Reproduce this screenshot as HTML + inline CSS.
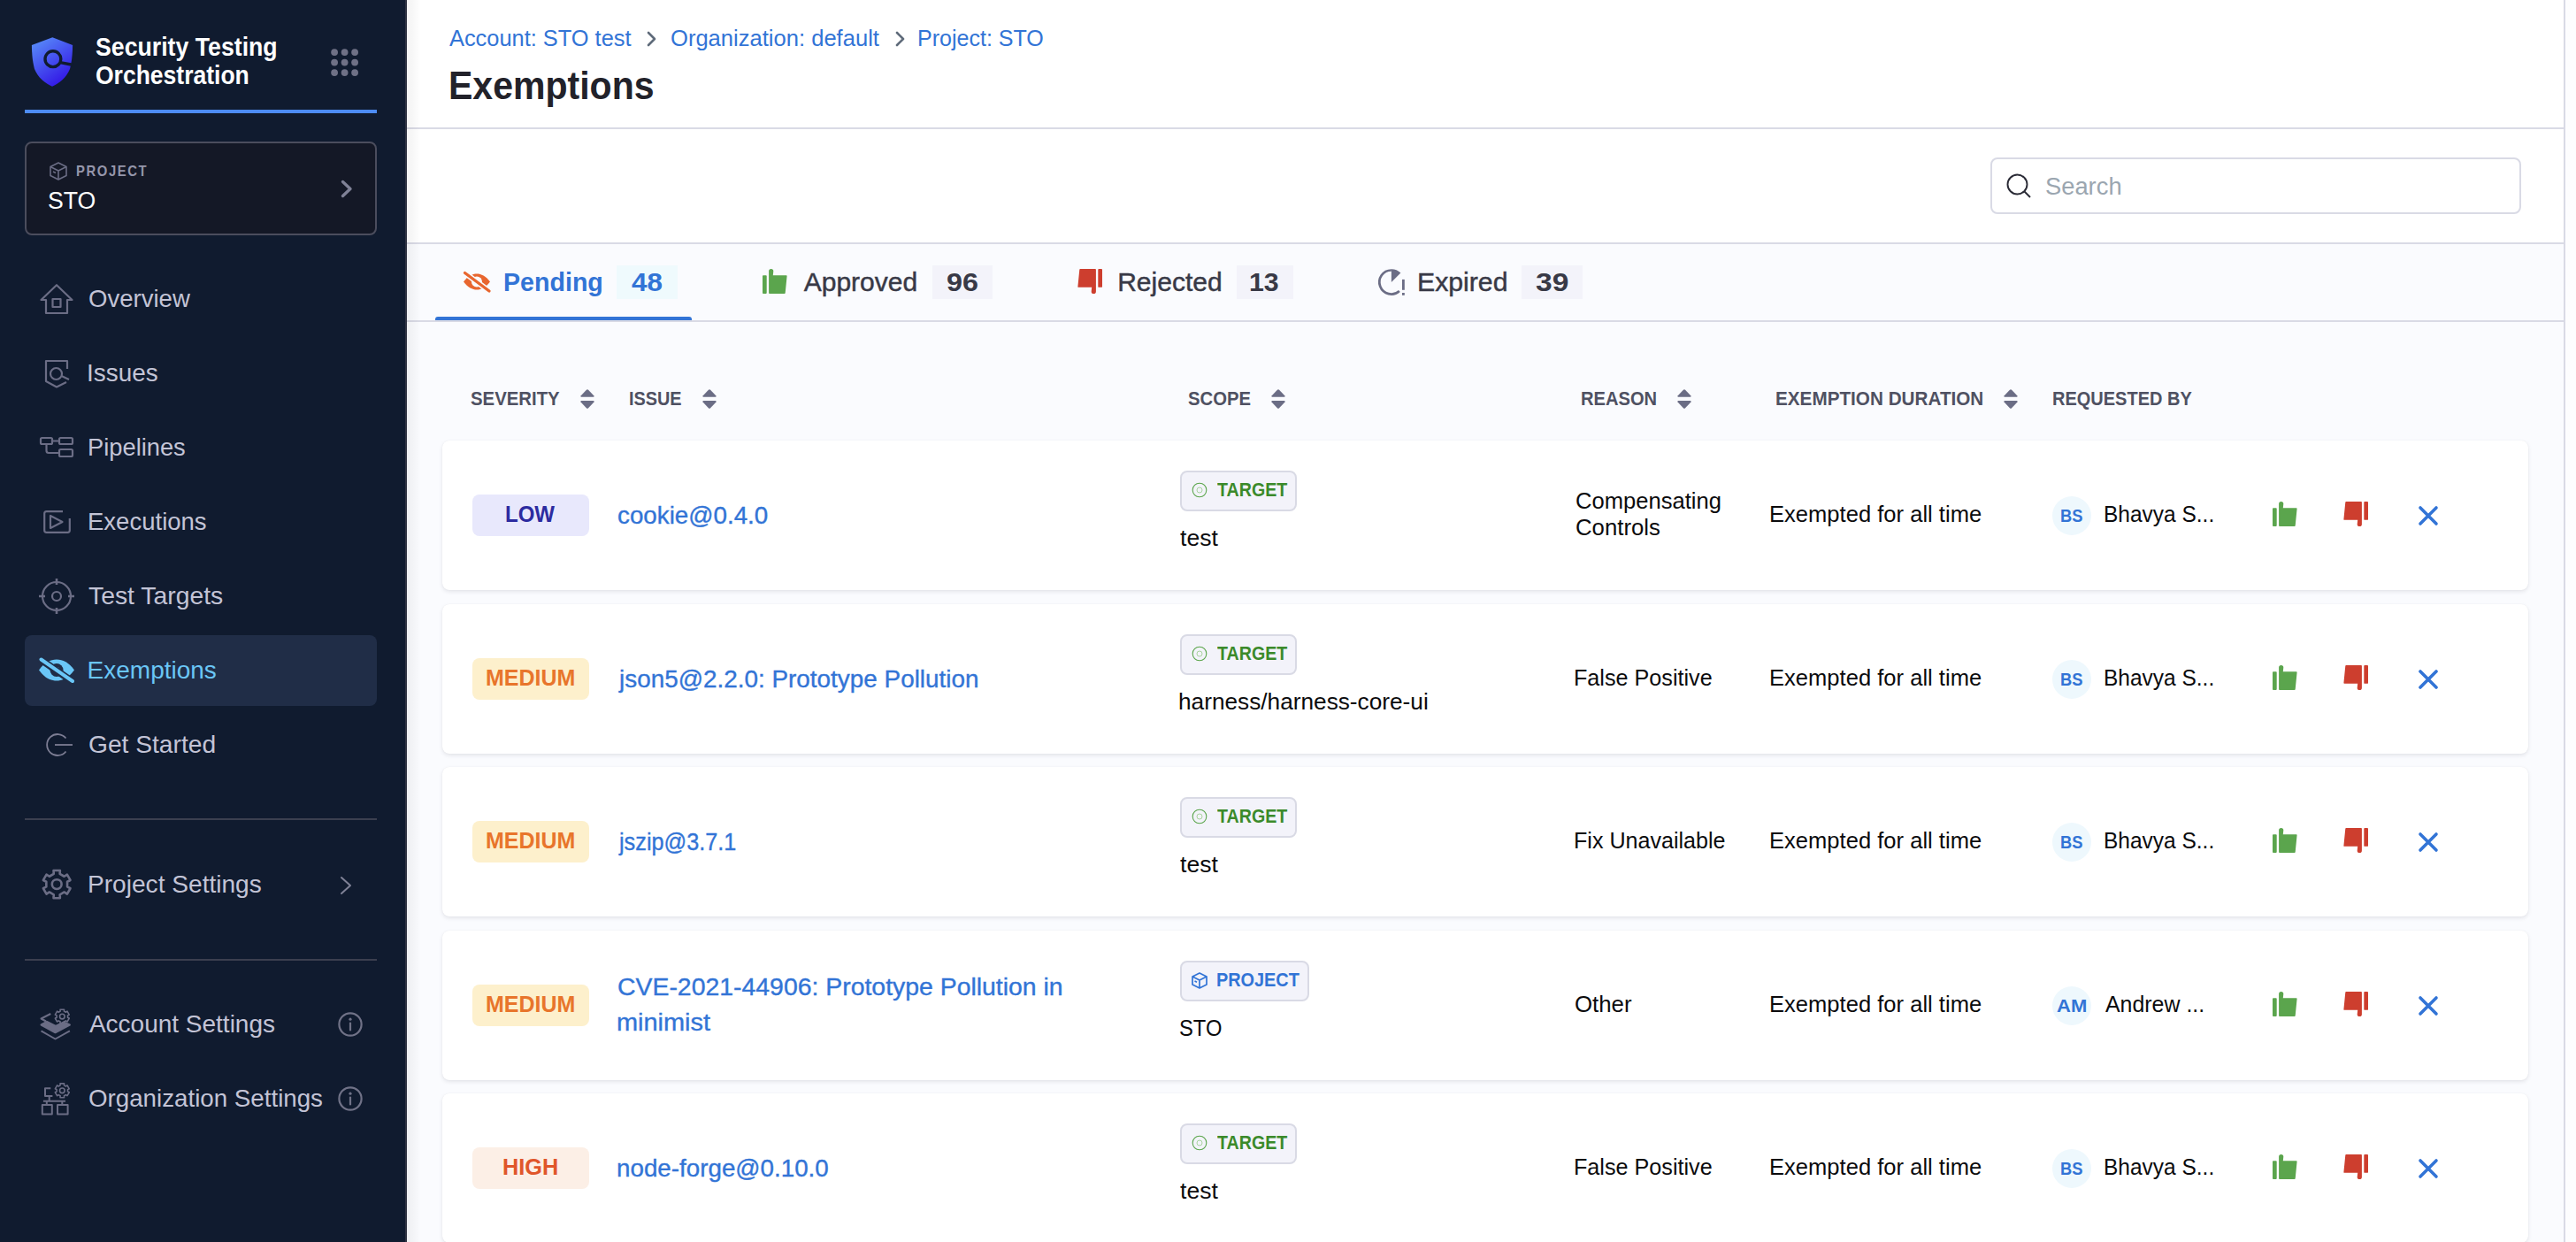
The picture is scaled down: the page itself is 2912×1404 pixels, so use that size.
<!DOCTYPE html>
<html><head><meta charset="utf-8"><title>Exemptions</title><style>
*{box-sizing:border-box;margin:0;padding:0}
html,body{width:2912px;height:1404px;overflow:hidden;background:#fafbfe;font-family:"Liberation Sans",sans-serif}
.a{position:absolute}
svg{position:absolute;overflow:visible}
.t{position:absolute;white-space:nowrap;line-height:1;transform-origin:0 0}
.card{position:absolute;left:500px;width:2358px;height:169px;background:#fff;border-radius:8px;box-shadow:0 0 1px rgba(40,41,61,0.08),0 2px 4px rgba(96,97,112,0.14)}
</style></head><body>
<div class="a" style="left:0px;top:0px;width:458px;height:1404px;background:#101b2f;"></div>
<div class="a" style="left:458px;top:0px;width:2px;height:1404px;background:#2f3342;"></div>
<svg style="left:35px;top:42px" width="48" height="56" viewBox="0 0 48 56">
<defs><linearGradient id="lg" x1="0" y1="0" x2="0.6" y2="1"><stop offset="0" stop-color="#5b95fa"/><stop offset="1" stop-color="#3318e6"/></linearGradient></defs>
<path d="M24.3 0.2 L47.1 8.9 C47 20 46 28 44 36 C40 46 32 52 24 55.7 C16 52 8 46 4 36 C2 28 1 20 0.9 8.9 Z" fill="url(#lg)"/>
<circle cx="24.9" cy="24.7" r="8.9" fill="none" stroke="#101b2f" stroke-width="3.4"/>
<path d="M33 28.6 L48 31.5" stroke="#101b2f" stroke-width="3.4"/>
</svg>
<svg style="left:374px;top:55px" width="32" height="32" viewBox="0 0 32 32" fill="#6f7186"><circle cx="4.1" cy="4.1" r="3.9"/><circle cx="4.1" cy="15.6" r="3.9"/><circle cx="4.1" cy="27.1" r="3.9"/><circle cx="15.6" cy="4.1" r="3.9"/><circle cx="15.6" cy="15.6" r="3.9"/><circle cx="15.6" cy="27.1" r="3.9"/><circle cx="27.1" cy="4.1" r="3.9"/><circle cx="27.1" cy="15.6" r="3.9"/><circle cx="27.1" cy="27.1" r="3.9"/></svg>
<div class="a" style="left:28px;top:124px;width:398px;height:4px;background:#4d8cf6;"></div>
<div class="a" style="left:28px;top:160px;width:398px;height:106px;border:2px solid #4b4d5d;border-radius:8px;background:#141826"></div>
<svg style="left:56px;top:183px" width="20" height="21" viewBox="0 0 20 21" fill="none" stroke="#6b6d85" stroke-width="1.6" stroke-linejoin="round">
<path d="M10 1 L19 5.5 V15.5 L10 20 L1 15.5 V5.5 Z"/><path d="M1 5.5 L10 10 L19 5.5 M10 10 V20"/><path d="M4 11 L7 12.5"/></svg>
<svg style="left:385px;top:203px" width="14" height="21" viewBox="0 0 14 21" fill="none" stroke="#7f8196" stroke-width="3.4" stroke-linecap="round" stroke-linejoin="round"><path d="M2.5 2.5 L11 10.5 L2.5 18.5"/></svg>
<div class="a" style="left:28px;top:718px;width:398px;height:80px;background:#202d47;border-radius:8px"></div>
<svg style="left:45px;top:321px" width="38" height="34" viewBox="0 0 38 34" stroke="#6b6d85" stroke-width="2.2" fill="none" stroke-linejoin="round"><path d="M19 1.2 L36.5 18 H31 V33 H7 V18 H1.5 Z"/><rect x="14.5" y="17" width="9" height="9"/></svg>
<svg style="left:50px;top:406px" width="30" height="33" viewBox="0 0 30 33" stroke="#6b6d85" stroke-width="2.2" fill="none" stroke-linejoin="round"><path d="M26 11 V2 H2 V25 L14 31.5 L25 26"/><circle cx="13.5" cy="16.5" r="6.5"/><path d="M19.5 19 L28 23"/></svg>
<svg style="left:45px;top:494px" width="38" height="23" viewBox="0 0 38 23" stroke="#6b6d85" stroke-width="2.2" fill="none" stroke-linejoin="round"><rect x="1" y="1" width="13" height="7" rx="1.5"/><rect x="22" y="1" width="15" height="7" rx="1.5"/><rect x="22" y="14" width="15" height="8" rx="1.5"/><path d="M14 4.5 H22 M7.5 8 V15.5 Q7.5 18 10 18 H22"/></svg>
<svg style="left:49px;top:577px" width="31" height="26" viewBox="0 0 31 26" stroke="#6b6d85" stroke-width="2.2" fill="none" stroke-linejoin="round"><path d="M22 1.2 H3.5 Q1.2 1.2 1.2 3.5 V22.5 Q1.2 24.8 3.5 24.8 H27.5 Q29.8 24.8 29.8 22.5 V9"/><path d="M8 6 V20 L21.5 13 Z"/></svg>
<svg style="left:45px;top:655px" width="38" height="38" viewBox="0 0 38 38" stroke="#6b6d85" stroke-width="2.2" fill="none" stroke-linejoin="round"><circle cx="19" cy="19" r="16"/><circle cx="19" cy="19" r="5"/><path d="M19 -1 V6 M19 32 V39 M-1 19 H6 M32 19 H39" stroke-width="2.6"/></svg>
<svg style="left:43px;top:743px" width="42" height="30" viewBox="0 0 42 30">
<path d="M1 14.5 C7 6 14 2.5 21 2.5 C28 2.5 35 6 41 14.5 C35 23 28 26.5 21 26.5 C14 26.5 7 23 1 14.5 Z" fill="#6ac6f6"/>
<circle cx="21" cy="14.5" r="7.5" fill="#202d47"/><circle cx="21" cy="14.5" r="3.5" fill="#6ac6f6"/>
<path d="M3 2.5 L39 27.5" stroke="#202d47" stroke-width="8" stroke-linecap="round"/>
<path d="M3.5 2.5 L39 27" stroke="#6ac6f6" stroke-width="4" stroke-linecap="round"/></svg>
<svg style="left:50px;top:828px" width="34" height="28" viewBox="0 0 34 28" stroke="#7c7d93" stroke-width="1.8" fill="none"><path d="M24.5 6.5 A12 12 0 1 0 24.5 21.5"/><path d="M12 14 H32"/></svg>
<div class="a" style="left:28px;top:925px;width:398px;height:2px;background:#3b3f4f;"></div>
<div class="a" style="left:28px;top:1084px;width:398px;height:2px;background:#3b3f4f;"></div>
<svg style="left:47px;top:982px" width="34" height="35" viewBox="0 0 34 35" stroke="#6b6d85" stroke-width="2.2" fill="none" stroke-linejoin="round"><path d="M13.74 5.90 L13.55 2.02 L20.85 2.02 L20.66 5.90 L25.60 8.75 L28.87 6.65 L32.52 12.97 L29.06 14.75 L29.06 20.45 L32.52 22.23 L28.87 28.55 L25.60 26.45 L20.66 29.30 L20.85 33.18 L13.55 33.18 L13.74 29.30 L8.80 26.45 L5.53 28.55 L1.88 22.23 L5.34 20.45 L5.34 14.75 L1.88 12.97 L5.53 6.65 L8.80 8.75Z" stroke-width="2.6"/><circle cx="17.2" cy="17.6" r="5.4" stroke-width="2.6"/></svg>
<svg style="left:384px;top:990px" width="14" height="22" viewBox="0 0 14 22" fill="none" stroke="#7f8196" stroke-width="2" stroke-linecap="round" stroke-linejoin="round"><path d="M2 2 L12 11 L2 20"/></svg>
<svg style="left:40px;top:1135px" width="45" height="130" viewBox="0 0 45 130" stroke="#6b6d85" stroke-width="2" fill="none" stroke-linejoin="round">
<path d="M28.14 8.18 L28.03 6.22 L32.57 6.22 L32.46 8.18 L34.35 9.27 L35.99 8.20 L38.26 12.12 L36.51 13.01 L36.51 15.19 L38.26 16.08 L35.99 20.00 L34.35 18.93 L32.46 20.02 L32.57 21.98 L28.03 21.98 L28.14 20.02 L26.25 18.93 L24.61 20.00 L22.34 16.08 L24.09 15.19 L24.09 13.01 L22.34 12.12 L24.61 8.20 L26.25 9.27Z" stroke-width="1.6"/><circle cx="30.3" cy="14.1" r="2.8" stroke-width="1.6"/>
<path d="M17.3 11 L6.5 16.5 L12 19.5"/>
<path d="M6.5 23.5 L13 20 L23 25 L32 20.5 L38.9 23.5 L22.5 32.3 Z" fill="#6b6d85"/>
<path d="M6.5 30.3 L22.5 39.5 L38.9 30.3"/>
<path d="M28.14 91.88 L28.03 89.92 L32.57 89.92 L32.46 91.88 L34.35 92.97 L35.99 91.90 L38.26 95.82 L36.51 96.71 L36.51 98.89 L38.26 99.78 L35.99 103.70 L34.35 102.63 L32.46 103.72 L32.57 105.68 L28.03 105.68 L28.14 103.72 L26.25 102.63 L24.61 103.70 L22.34 99.78 L24.09 98.89 L24.09 96.71 L22.34 95.82 L24.61 91.90 L26.25 92.97Z" stroke-width="1.6"/><circle cx="30.3" cy="97.8" r="2.8" stroke-width="1.6"/>
<path d="M17.3 95.2 H11 V104 H19.4 M15.7 104 V109.8 M8.9 109.8 H34 M12.8 109.8 V114 M30.3 109.8 V114"/>
<rect x="7.8" y="114" width="11" height="10.5"/><rect x="25" y="114" width="11.6" height="10.5"/>
</svg>
<svg style="left:382px;top:1144px" width="28" height="28" viewBox="0 0 28 28" stroke="#707287" stroke-width="2.2" fill="none" stroke-linecap="round"><circle cx="14" cy="14" r="12.6"/><path d="M14 12.5 V20.5"/><circle cx="14" cy="8.2" r="1.6" fill="#707287" stroke="none"/></svg>
<svg style="left:382px;top:1228px" width="28" height="28" viewBox="0 0 28 28" stroke="#707287" stroke-width="2.2" fill="none" stroke-linecap="round"><circle cx="14" cy="14" r="12.6"/><path d="M14 12.5 V20.5"/><circle cx="14" cy="8.2" r="1.6" fill="#707287" stroke="none"/></svg>
<div class="a" style="left:460px;top:0px;width:2438px;height:144px;background:#fff;"></div>
<div class="a" style="left:460px;top:144px;width:2438px;height:2px;background:#d9dae5;"></div>
<div class="a" style="left:460px;top:146px;width:2438px;height:128px;background:#fff;"></div>
<div class="a" style="left:460px;top:274px;width:2438px;height:2px;background:#d9dae5;"></div>
<div class="a" style="left:460px;top:276px;width:2438px;height:86px;background:#fafbfe;"></div>
<div class="a" style="left:460px;top:362px;width:2438px;height:2px;background:#d9dae5;"></div>
<div class="a" style="left:2898px;top:0px;width:2px;height:1404px;background:#d9dae5;"></div>
<div class="a" style="left:2900px;top:0px;width:12px;height:1404px;background:#fdfdfe;"></div>
<div class="a" style="left:460px;top:0px;width:16px;height:1404px;background:linear-gradient(90deg,rgba(0,0,0,0.05),rgba(0,0,0,0));"></div>
<svg style="left:731px;top:35px" width="11" height="18" viewBox="0 0 11 18" fill="none" stroke="#5f6b7a" stroke-width="2.6" stroke-linecap="round" stroke-linejoin="round"><path d="M2 2 L9 9 L2 16"/></svg>
<svg style="left:1012px;top:35px" width="11" height="18" viewBox="0 0 11 18" fill="none" stroke="#5f6b7a" stroke-width="2.6" stroke-linecap="round" stroke-linejoin="round"><path d="M2 2 L9 9 L2 16"/></svg>
<div class="a" style="left:2250px;top:178px;width:600px;height:64px;border:2px solid #d9dae5;border-radius:8px;background:#fff"></div>
<svg style="left:2268px;top:196px" width="28" height="28" viewBox="0 0 28 28" fill="none" stroke="#2a2b36" stroke-width="1.9"><circle cx="12.5" cy="12.5" r="11"/><path d="M20.5 20.5 L27 27"/></svg>
<div class="a" style="left:697px;top:300px;width:69px;height:38px;background:#effafd;"></div>
<div class="a" style="left:1054px;top:300px;width:68px;height:38px;background:#f3f3fa;"></div>
<div class="a" style="left:1398px;top:300px;width:64px;height:38px;background:#f3f3fa;"></div>
<div class="a" style="left:1720px;top:300px;width:69px;height:38px;background:#f3f3fa;"></div>
<div class="a" style="left:492px;top:358px;width:290px;height:4px;background:#3274d6;border-radius:3px 3px 0 0"></div>
<svg style="left:523px;top:307px" width="32" height="24" viewBox="0 0 32 24">
<path d="M1 11.5 C6 5 11 2.5 16 2.5 C21 2.5 26 5 31 11.5 C26 18 21 20.5 16 20.5 C11 20.5 6 18 1 11.5 Z" fill="#e8662f"/>
<circle cx="16" cy="11.5" r="6" fill="#fafbfe"/><circle cx="16" cy="11.5" r="2.8" fill="#e8662f"/>
<path d="M2.5 1.5 L30 22" stroke="#fafbfe" stroke-width="6.5" stroke-linecap="round"/>
<path d="M2.5 1.5 L30 22" stroke="#e8662f" stroke-width="3.3" stroke-linecap="round"/></svg>
<svg style="left:862px;top:304px" width="28" height="28" viewBox="0 0 28 28" fill="#5ba54d"><rect x="0" y="7.2" width="4.7" height="20.8" rx="0.9"/><path d="M7.1 27.2 V2.6 Q7.1 0 9.7 0 Q12.3 0 12.3 2.6 L11.8 7.2 H26.8 Q27.7 7.2 27.6 8.1 L25.7 27.2 Q25.6 28 24.8 28 H7.9 Q7.1 28 7.1 27.2 Z"/></svg>
<svg style="left:1218px;top:304px" width="28" height="28" viewBox="0 0 28 28" fill="#cd3e2e"><g transform="translate(28 28) rotate(180)"><rect x="0" y="7.2" width="4.7" height="20.8" rx="0.9"/><path d="M7.1 27.2 V2.6 Q7.1 0 9.7 0 Q12.3 0 12.3 2.6 L11.8 7.2 H26.8 Q27.7 7.2 27.6 8.1 L25.7 27.2 Q25.6 28 24.8 28 H7.9 Q7.1 28 7.1 27.2 Z"/></g></svg>
<svg style="left:1557px;top:304px" width="32" height="30" viewBox="0 0 32 30" fill="#6b6d85">
<path d="M15.9 1.5 A13.5 13.5 0 1 0 24.9 25.0" fill="none" stroke="#6b6d85" stroke-width="2.7"/>
<path d="M15.9 15 V0.2 A14.8 14.8 0 0 1 26.4 4.5 Z"/>
<rect x="28" y="11.9" width="2.8" height="11.9"/><rect x="28" y="27" width="2.8" height="2.8"/></svg>
<svg style="left:656px;top:440px" width="16" height="22" viewBox="0 0 16 22" fill="#6b6d85"><path d="M8 0.3 Q8.6 0.3 9.1 0.8 L15.5 7.6 Q15.9 8.8 14.8 8.8 H1.2 Q0.1 8.8 0.5 7.6 L6.9 0.8 Q7.4 0.3 8 0.3 Z"/><path d="M8 21.7 Q8.6 21.7 9.1 21.2 L15.5 14.4 Q15.9 13.1 14.8 13.1 H1.2 Q0.1 13.1 0.5 14.4 L6.9 21.2 Q7.4 21.7 8 21.7 Z"/></svg>
<svg style="left:794px;top:440px" width="16" height="22" viewBox="0 0 16 22" fill="#6b6d85"><path d="M8 0.3 Q8.6 0.3 9.1 0.8 L15.5 7.6 Q15.9 8.8 14.8 8.8 H1.2 Q0.1 8.8 0.5 7.6 L6.9 0.8 Q7.4 0.3 8 0.3 Z"/><path d="M8 21.7 Q8.6 21.7 9.1 21.2 L15.5 14.4 Q15.9 13.1 14.8 13.1 H1.2 Q0.1 13.1 0.5 14.4 L6.9 21.2 Q7.4 21.7 8 21.7 Z"/></svg>
<svg style="left:1437px;top:440px" width="16" height="22" viewBox="0 0 16 22" fill="#6b6d85"><path d="M8 0.3 Q8.6 0.3 9.1 0.8 L15.5 7.6 Q15.9 8.8 14.8 8.8 H1.2 Q0.1 8.8 0.5 7.6 L6.9 0.8 Q7.4 0.3 8 0.3 Z"/><path d="M8 21.7 Q8.6 21.7 9.1 21.2 L15.5 14.4 Q15.9 13.1 14.8 13.1 H1.2 Q0.1 13.1 0.5 14.4 L6.9 21.2 Q7.4 21.7 8 21.7 Z"/></svg>
<svg style="left:1896px;top:440px" width="16" height="22" viewBox="0 0 16 22" fill="#6b6d85"><path d="M8 0.3 Q8.6 0.3 9.1 0.8 L15.5 7.6 Q15.9 8.8 14.8 8.8 H1.2 Q0.1 8.8 0.5 7.6 L6.9 0.8 Q7.4 0.3 8 0.3 Z"/><path d="M8 21.7 Q8.6 21.7 9.1 21.2 L15.5 14.4 Q15.9 13.1 14.8 13.1 H1.2 Q0.1 13.1 0.5 14.4 L6.9 21.2 Q7.4 21.7 8 21.7 Z"/></svg>
<svg style="left:2265px;top:440px" width="16" height="22" viewBox="0 0 16 22" fill="#6b6d85"><path d="M8 0.3 Q8.6 0.3 9.1 0.8 L15.5 7.6 Q15.9 8.8 14.8 8.8 H1.2 Q0.1 8.8 0.5 7.6 L6.9 0.8 Q7.4 0.3 8 0.3 Z"/><path d="M8 21.7 Q8.6 21.7 9.1 21.2 L15.5 14.4 Q15.9 13.1 14.8 13.1 H1.2 Q0.1 13.1 0.5 14.4 L6.9 21.2 Q7.4 21.7 8 21.7 Z"/></svg>
<div class="card" style="top:498px"></div>
<div class="a" style="left:534px;top:559px;width:132px;height:47px;background:#e8e8fc;border-radius:8px"></div>
<div class="a" style="left:1334px;top:532px;width:132px;height:46px;border:2px solid #d9dae5;background:#f3f3fa;border-radius:8px"></div>
<svg style="left:1347px;top:545px" width="18" height="18" viewBox="0 0 18 18"><circle cx="9" cy="9" r="7.8" fill="none" stroke="#5aa54b" stroke-width="1.1"/><circle cx="9" cy="9" r="3" fill="none" stroke="#a8d49e" stroke-width="1"/></svg>
<div class="a" style="left:2320px;top:561px;width:44px;height:44px;background:#eef8fd;border-radius:50%"></div>
<svg style="left:2569px;top:567px" width="28" height="28" viewBox="0 0 28 28" fill="#5ba54d"><rect x="0" y="7.2" width="4.7" height="20.8" rx="0.9"/><path d="M7.1 27.2 V2.6 Q7.1 0 9.7 0 Q12.3 0 12.3 2.6 L11.8 7.2 H26.8 Q27.7 7.2 27.6 8.1 L25.7 27.2 Q25.6 28 24.8 28 H7.9 Q7.1 28 7.1 27.2 Z"/></svg>
<svg style="left:2649px;top:567px" width="28" height="28" viewBox="0 0 28 28" fill="#cd3e2e"><g transform="translate(28 28) rotate(180)"><rect x="0" y="7.2" width="4.7" height="20.8" rx="0.9"/><path d="M7.1 27.2 V2.6 Q7.1 0 9.7 0 Q12.3 0 12.3 2.6 L11.8 7.2 H26.8 Q27.7 7.2 27.6 8.1 L25.7 27.2 Q25.6 28 24.8 28 H7.9 Q7.1 28 7.1 27.2 Z"/></g></svg>
<svg style="left:2734px;top:572px" width="22" height="22" viewBox="0 0 22 22" stroke="#3274d6" stroke-width="3.6" stroke-linecap="round"><path d="M2 2 L20 20 M20 2 L2 20"/></svg>
<div class="card" style="top:683px"></div>
<div class="a" style="left:534px;top:744px;width:132px;height:47px;background:#fdf0cc;border-radius:8px"></div>
<div class="a" style="left:1334px;top:717px;width:132px;height:46px;border:2px solid #d9dae5;background:#f3f3fa;border-radius:8px"></div>
<svg style="left:1347px;top:730px" width="18" height="18" viewBox="0 0 18 18"><circle cx="9" cy="9" r="7.8" fill="none" stroke="#5aa54b" stroke-width="1.1"/><circle cx="9" cy="9" r="3" fill="none" stroke="#a8d49e" stroke-width="1"/></svg>
<div class="a" style="left:2320px;top:746px;width:44px;height:44px;background:#eef8fd;border-radius:50%"></div>
<svg style="left:2569px;top:752px" width="28" height="28" viewBox="0 0 28 28" fill="#5ba54d"><rect x="0" y="7.2" width="4.7" height="20.8" rx="0.9"/><path d="M7.1 27.2 V2.6 Q7.1 0 9.7 0 Q12.3 0 12.3 2.6 L11.8 7.2 H26.8 Q27.7 7.2 27.6 8.1 L25.7 27.2 Q25.6 28 24.8 28 H7.9 Q7.1 28 7.1 27.2 Z"/></svg>
<svg style="left:2649px;top:752px" width="28" height="28" viewBox="0 0 28 28" fill="#cd3e2e"><g transform="translate(28 28) rotate(180)"><rect x="0" y="7.2" width="4.7" height="20.8" rx="0.9"/><path d="M7.1 27.2 V2.6 Q7.1 0 9.7 0 Q12.3 0 12.3 2.6 L11.8 7.2 H26.8 Q27.7 7.2 27.6 8.1 L25.7 27.2 Q25.6 28 24.8 28 H7.9 Q7.1 28 7.1 27.2 Z"/></g></svg>
<svg style="left:2734px;top:757px" width="22" height="22" viewBox="0 0 22 22" stroke="#3274d6" stroke-width="3.6" stroke-linecap="round"><path d="M2 2 L20 20 M20 2 L2 20"/></svg>
<div class="card" style="top:867px"></div>
<div class="a" style="left:534px;top:928px;width:132px;height:47px;background:#fdf0cc;border-radius:8px"></div>
<div class="a" style="left:1334px;top:901px;width:132px;height:46px;border:2px solid #d9dae5;background:#f3f3fa;border-radius:8px"></div>
<svg style="left:1347px;top:914px" width="18" height="18" viewBox="0 0 18 18"><circle cx="9" cy="9" r="7.8" fill="none" stroke="#5aa54b" stroke-width="1.1"/><circle cx="9" cy="9" r="3" fill="none" stroke="#a8d49e" stroke-width="1"/></svg>
<div class="a" style="left:2320px;top:930px;width:44px;height:44px;background:#eef8fd;border-radius:50%"></div>
<svg style="left:2569px;top:936px" width="28" height="28" viewBox="0 0 28 28" fill="#5ba54d"><rect x="0" y="7.2" width="4.7" height="20.8" rx="0.9"/><path d="M7.1 27.2 V2.6 Q7.1 0 9.7 0 Q12.3 0 12.3 2.6 L11.8 7.2 H26.8 Q27.7 7.2 27.6 8.1 L25.7 27.2 Q25.6 28 24.8 28 H7.9 Q7.1 28 7.1 27.2 Z"/></svg>
<svg style="left:2649px;top:936px" width="28" height="28" viewBox="0 0 28 28" fill="#cd3e2e"><g transform="translate(28 28) rotate(180)"><rect x="0" y="7.2" width="4.7" height="20.8" rx="0.9"/><path d="M7.1 27.2 V2.6 Q7.1 0 9.7 0 Q12.3 0 12.3 2.6 L11.8 7.2 H26.8 Q27.7 7.2 27.6 8.1 L25.7 27.2 Q25.6 28 24.8 28 H7.9 Q7.1 28 7.1 27.2 Z"/></g></svg>
<svg style="left:2734px;top:941px" width="22" height="22" viewBox="0 0 22 22" stroke="#3274d6" stroke-width="3.6" stroke-linecap="round"><path d="M2 2 L20 20 M20 2 L2 20"/></svg>
<div class="card" style="top:1052px"></div>
<div class="a" style="left:534px;top:1113px;width:132px;height:47px;background:#fdf0cc;border-radius:8px"></div>
<div class="a" style="left:1334px;top:1086px;width:146px;height:46px;border:2px solid #d9dae5;background:#f3f3fa;border-radius:8px"></div>
<svg style="left:1347px;top:1099px" width="18" height="18" viewBox="0 0 18 18"><g fill="none" stroke="#3274d6" stroke-width="1.7" stroke-linejoin="round"><path d="M9 1 L17 5 V14 L9 18 L1 14 V5 Z"/><path d="M1 5 L9 9 L17 5 M9 9 V18"/><path d="M3.5 10 L6 11.2"/></g></svg>
<div class="a" style="left:2320px;top:1115px;width:44px;height:44px;background:#eef8fd;border-radius:50%"></div>
<svg style="left:2569px;top:1121px" width="28" height="28" viewBox="0 0 28 28" fill="#5ba54d"><rect x="0" y="7.2" width="4.7" height="20.8" rx="0.9"/><path d="M7.1 27.2 V2.6 Q7.1 0 9.7 0 Q12.3 0 12.3 2.6 L11.8 7.2 H26.8 Q27.7 7.2 27.6 8.1 L25.7 27.2 Q25.6 28 24.8 28 H7.9 Q7.1 28 7.1 27.2 Z"/></svg>
<svg style="left:2649px;top:1121px" width="28" height="28" viewBox="0 0 28 28" fill="#cd3e2e"><g transform="translate(28 28) rotate(180)"><rect x="0" y="7.2" width="4.7" height="20.8" rx="0.9"/><path d="M7.1 27.2 V2.6 Q7.1 0 9.7 0 Q12.3 0 12.3 2.6 L11.8 7.2 H26.8 Q27.7 7.2 27.6 8.1 L25.7 27.2 Q25.6 28 24.8 28 H7.9 Q7.1 28 7.1 27.2 Z"/></g></svg>
<svg style="left:2734px;top:1126px" width="22" height="22" viewBox="0 0 22 22" stroke="#3274d6" stroke-width="3.6" stroke-linecap="round"><path d="M2 2 L20 20 M20 2 L2 20"/></svg>
<div class="card" style="top:1236px"></div>
<div class="a" style="left:534px;top:1297px;width:132px;height:47px;background:#fcefe6;border-radius:8px"></div>
<div class="a" style="left:1334px;top:1270px;width:132px;height:46px;border:2px solid #d9dae5;background:#f3f3fa;border-radius:8px"></div>
<svg style="left:1347px;top:1283px" width="18" height="18" viewBox="0 0 18 18"><circle cx="9" cy="9" r="7.8" fill="none" stroke="#5aa54b" stroke-width="1.1"/><circle cx="9" cy="9" r="3" fill="none" stroke="#a8d49e" stroke-width="1"/></svg>
<div class="a" style="left:2320px;top:1299px;width:44px;height:44px;background:#eef8fd;border-radius:50%"></div>
<svg style="left:2569px;top:1305px" width="28" height="28" viewBox="0 0 28 28" fill="#5ba54d"><rect x="0" y="7.2" width="4.7" height="20.8" rx="0.9"/><path d="M7.1 27.2 V2.6 Q7.1 0 9.7 0 Q12.3 0 12.3 2.6 L11.8 7.2 H26.8 Q27.7 7.2 27.6 8.1 L25.7 27.2 Q25.6 28 24.8 28 H7.9 Q7.1 28 7.1 27.2 Z"/></svg>
<svg style="left:2649px;top:1305px" width="28" height="28" viewBox="0 0 28 28" fill="#cd3e2e"><g transform="translate(28 28) rotate(180)"><rect x="0" y="7.2" width="4.7" height="20.8" rx="0.9"/><path d="M7.1 27.2 V2.6 Q7.1 0 9.7 0 Q12.3 0 12.3 2.6 L11.8 7.2 H26.8 Q27.7 7.2 27.6 8.1 L25.7 27.2 Q25.6 28 24.8 28 H7.9 Q7.1 28 7.1 27.2 Z"/></g></svg>
<svg style="left:2734px;top:1310px" width="22" height="22" viewBox="0 0 22 22" stroke="#3274d6" stroke-width="3.6" stroke-linecap="round"><path d="M2 2 L20 20 M20 2 L2 20"/></svg>
<div class="t" style="left:107.98px;top:39.30px;font-size:29px;font-weight:bold;color:#fff;;transform:scaleX(0.9204);">Security Testing</div>
<div class="t" style="left:107.99px;top:70.60px;font-size:29px;font-weight:bold;color:#fff;;transform:scaleX(0.9138);">Orchestration</div>
<div class="t" style="left:85.53px;top:185.00px;font-size:17px;font-weight:bold;color:#9596ab;letter-spacing:1.8px;transform:scaleX(0.8733);">PROJECT</div>
<div class="t" style="left:53.82px;top:213.60px;font-size:27px;font-weight:normal;color:#fff;;transform:scaleX(0.9849);">STO</div>
<div class="t" style="left:99.62px;top:323.80px;font-size:28px;font-weight:normal;color:#c3c4d6;;transform:scaleX(0.9836);">Overview</div>
<div class="t" style="left:97.61px;top:407.90px;font-size:28px;font-weight:normal;color:#c3c4d6;;transform:scaleX(0.9961);">Issues</div>
<div class="t" style="left:98.65px;top:491.90px;font-size:28px;font-weight:normal;color:#c3c4d6;;transform:scaleX(0.9748);">Pipelines</div>
<div class="t" style="left:98.63px;top:576.00px;font-size:28px;font-weight:normal;color:#c3c4d6;;transform:scaleX(0.9828);">Executions</div>
<div class="t" style="left:99.59px;top:660.10px;font-size:28px;font-weight:normal;color:#c3c4d6;;transform:scaleX(1.0114);">Test Targets</div>
<div class="t" style="left:98.59px;top:744.20px;font-size:28px;font-weight:normal;color:#6ac6f6;;">Exemptions</div>
<div class="t" style="left:99.59px;top:828.20px;font-size:28px;font-weight:normal;color:#c3c4d6;;transform:scaleX(1.0064);">Get Started</div>
<div class="t" style="left:98.89px;top:986.10px;font-size:28px;font-weight:normal;color:#c3c4d6;;transform:scaleX(1.0036);">Project Settings</div>
<div class="t" style="left:100.90px;top:1143.90px;font-size:28px;font-weight:normal;color:#c3c4d6;;">Account Settings</div>
<div class="t" style="left:99.91px;top:1227.70px;font-size:28px;font-weight:normal;color:#c3c4d6;;transform:scaleX(0.9898);">Organization Settings</div>
<div class="t" style="left:508.40px;top:30.10px;font-size:26px;font-weight:normal;color:#3274d6;;transform:scaleX(0.9762);">Account: STO test</div>
<div class="t" style="left:758.02px;top:30.10px;font-size:26px;font-weight:normal;color:#3274d6;;transform:scaleX(0.9833);">Organization: default</div>
<div class="t" style="left:1037.47px;top:30.10px;font-size:26px;font-weight:normal;color:#3274d6;;transform:scaleX(0.9628);">Project: STO</div>
<div class="t" style="left:506.97px;top:76.20px;font-size:43.5px;font-weight:bold;color:#22222a;;transform:scaleX(0.9430);">Exemptions</div>
<div class="t" style="left:2311.79px;top:198.20px;font-size:27px;font-weight:normal;color:#9ba6b0;;transform:scaleX(1.0120);">Search</div>
<div class="t" style="left:569.39px;top:304.10px;font-size:30px;font-weight:bold;color:#3274d6;;transform:scaleX(0.9535);">Pending</div>
<div class="t" style="left:713.80px;top:304.10px;font-size:30px;font-weight:bold;color:#3274d6;;transform:scaleX(1.0455);">48</div>
<div class="t" style="left:908.70px;top:303.80px;font-size:30px;font-weight:normal;color:#383946;-webkit-text-stroke:0.45px #383946;">Approved</div>
<div class="t" style="left:1069.82px;top:303.80px;font-size:30px;font-weight:bold;color:#383946;;transform:scaleX(1.0774);">96</div>
<div class="t" style="left:1263.20px;top:303.80px;font-size:30px;font-weight:normal;color:#383946;-webkit-text-stroke:0.45px #383946;">Rejected</div>
<div class="t" style="left:1412.28px;top:303.80px;font-size:30px;font-weight:bold;color:#383946;;transform:scaleX(1.0100);">13</div>
<div class="t" style="left:1602.29px;top:303.80px;font-size:30px;font-weight:normal;color:#383946;-webkit-text-stroke:0.45px #383946;transform:scaleX(1.0071);">Expired</div>
<div class="t" style="left:1736.18px;top:303.80px;font-size:30px;font-weight:bold;color:#383946;;transform:scaleX(1.1194);">39</div>
<div class="t" style="left:531.87px;top:440.30px;font-size:22px;font-weight:bold;color:#4f5162;;transform:scaleX(0.9252);">SEVERITY</div>
<div class="t" style="left:711.10px;top:440.30px;font-size:22px;font-weight:bold;color:#4f5162;;transform:scaleX(0.9031);">ISSUE</div>
<div class="t" style="left:1342.58px;top:440.30px;font-size:22px;font-weight:bold;color:#4f5162;;transform:scaleX(0.9213);">SCOPE</div>
<div class="t" style="left:1787.08px;top:440.30px;font-size:22px;font-weight:bold;color:#4f5162;;transform:scaleX(0.9152);">REASON</div>
<div class="t" style="left:2006.76px;top:440.30px;font-size:22px;font-weight:bold;color:#4f5162;;transform:scaleX(0.9407);">EXEMPTION DURATION</div>
<div class="t" style="left:2320.29px;top:440.30px;font-size:22px;font-weight:bold;color:#4f5162;;transform:scaleX(0.9087);">REQUESTED BY</div>
<div class="t" style="left:570.75px;top:567.80px;font-size:26px;font-weight:bold;color:#2c2ba0;;transform:scaleX(0.9237);">LOW</div>
<div class="t" style="left:697.77px;top:570.00px;font-size:27px;font-weight:normal;color:#3274d6;-webkit-text-stroke:0.35px #3274d6;transform:scaleX(1.0287);">cookie@0.4.0</div>
<div class="t" style="left:1376.20px;top:543.20px;font-size:22px;font-weight:bold;color:#3b8a2a;;transform:scaleX(0.8921);">TARGET</div>
<div class="t" style="left:1334.30px;top:596.00px;font-size:25px;font-weight:normal;color:#0b0b0d;;transform:scaleX(1.0625);">test</div>
<div class="t" style="left:1780.58px;top:553.80px;font-size:25px;font-weight:normal;color:#0b0b0d;;transform:scaleX(1.0226);">Compensating</div>
<div class="t" style="left:1780.57px;top:584.20px;font-size:25px;font-weight:normal;color:#0b0b0d;;transform:scaleX(1.0297);">Controls</div>
<div class="t" style="left:2000.25px;top:569.20px;font-size:25px;font-weight:normal;color:#0b0b0d;;transform:scaleX(1.0228);">Exempted for all time</div>
<div class="t" style="left:2329.13px;top:571.70px;font-size:21px;font-weight:bold;color:#3274d6;;transform:scaleX(0.8714);">BS</div>
<div class="t" style="left:2377.68px;top:569.00px;font-size:25.5px;font-weight:normal;color:#0b0b0d;;transform:scaleX(0.9603);">Bhavya S...</div>
<div class="t" style="left:549.08px;top:752.80px;font-size:26px;font-weight:bold;color:#e8752b;;transform:scaleX(0.9618);">MEDIUM</div>
<div class="t" style="left:699.83px;top:755.00px;font-size:27px;font-weight:normal;color:#3274d6;-webkit-text-stroke:0.35px #3274d6;transform:scaleX(1.0326);">json5@2.2.0: Prototype Pollution</div>
<div class="t" style="left:1376.20px;top:728.20px;font-size:22px;font-weight:bold;color:#3b8a2a;;transform:scaleX(0.8921);">TARGET</div>
<div class="t" style="left:1332.20px;top:781.00px;font-size:25px;font-weight:normal;color:#0b0b0d;;transform:scaleX(1.0489);">harness/harness-core-ui</div>
<div class="t" style="left:1779.39px;top:754.20px;font-size:25px;font-weight:normal;color:#0b0b0d;;transform:scaleX(1.0065);">False Positive</div>
<div class="t" style="left:2000.25px;top:754.20px;font-size:25px;font-weight:normal;color:#0b0b0d;;transform:scaleX(1.0228);">Exempted for all time</div>
<div class="t" style="left:2329.13px;top:756.70px;font-size:21px;font-weight:bold;color:#3274d6;;transform:scaleX(0.8714);">BS</div>
<div class="t" style="left:2377.68px;top:754.00px;font-size:25.5px;font-weight:normal;color:#0b0b0d;;transform:scaleX(0.9603);">Bhavya S...</div>
<div class="t" style="left:549.08px;top:936.80px;font-size:26px;font-weight:bold;color:#e8752b;;transform:scaleX(0.9618);">MEDIUM</div>
<div class="t" style="left:699.74px;top:939.00px;font-size:27px;font-weight:normal;color:#3274d6;-webkit-text-stroke:0.35px #3274d6;transform:scaleX(0.9359);">jszip@3.7.1</div>
<div class="t" style="left:1376.20px;top:912.20px;font-size:22px;font-weight:bold;color:#3b8a2a;;transform:scaleX(0.8921);">TARGET</div>
<div class="t" style="left:1334.30px;top:965.00px;font-size:25px;font-weight:normal;color:#0b0b0d;;transform:scaleX(1.0625);">test</div>
<div class="t" style="left:1779.39px;top:938.20px;font-size:25px;font-weight:normal;color:#0b0b0d;;transform:scaleX(1.0036);">Fix Unavailable</div>
<div class="t" style="left:2000.25px;top:938.20px;font-size:25px;font-weight:normal;color:#0b0b0d;;transform:scaleX(1.0228);">Exempted for all time</div>
<div class="t" style="left:2329.13px;top:940.70px;font-size:21px;font-weight:bold;color:#3274d6;;transform:scaleX(0.8714);">BS</div>
<div class="t" style="left:2377.68px;top:938.00px;font-size:25.5px;font-weight:normal;color:#0b0b0d;;transform:scaleX(0.9603);">Bhavya S...</div>
<div class="t" style="left:549.08px;top:1121.80px;font-size:26px;font-weight:bold;color:#e8752b;;transform:scaleX(0.9618);">MEDIUM</div>
<div class="t" style="left:697.75px;top:1103.00px;font-size:27px;font-weight:normal;color:#3274d6;-webkit-text-stroke:0.35px #3274d6;transform:scaleX(1.0519);">CVE-2021-44906: Prototype Pollution in</div>
<div class="t" style="left:696.66px;top:1142.70px;font-size:27px;font-weight:normal;color:#3274d6;-webkit-text-stroke:0.35px #3274d6;transform:scaleX(1.0711);">minimist</div>
<div class="t" style="left:1374.80px;top:1097.20px;font-size:22px;font-weight:bold;color:#3274d6;;transform:scaleX(0.9029);">PROJECT</div>
<div class="t" style="left:1333.35px;top:1150.00px;font-size:25px;font-weight:normal;color:#0b0b0d;;transform:scaleX(0.9490);">STO</div>
<div class="t" style="left:1780.37px;top:1123.20px;font-size:25px;font-weight:normal;color:#0b0b0d;;transform:scaleX(1.0328);">Other</div>
<div class="t" style="left:2000.25px;top:1123.20px;font-size:25px;font-weight:normal;color:#0b0b0d;;transform:scaleX(1.0228);">Exempted for all time</div>
<div class="t" style="left:2325.15px;top:1125.70px;font-size:21px;font-weight:bold;color:#3274d6;;transform:scaleX(1.0484);">AM</div>
<div class="t" style="left:2379.60px;top:1123.00px;font-size:25.5px;font-weight:normal;color:#0b0b0d;;transform:scaleX(0.9770);">Andrew ...</div>
<div class="t" style="left:568.35px;top:1305.80px;font-size:26px;font-weight:bold;color:#e0562a;;transform:scaleX(0.9738);">HIGH</div>
<div class="t" style="left:696.74px;top:1308.00px;font-size:27px;font-weight:normal;color:#3274d6;-webkit-text-stroke:0.35px #3274d6;transform:scaleX(1.0287);">node-forge@0.10.0</div>
<div class="t" style="left:1376.20px;top:1281.20px;font-size:22px;font-weight:bold;color:#3b8a2a;;transform:scaleX(0.8921);">TARGET</div>
<div class="t" style="left:1334.30px;top:1334.00px;font-size:25px;font-weight:normal;color:#0b0b0d;;transform:scaleX(1.0625);">test</div>
<div class="t" style="left:1779.39px;top:1307.20px;font-size:25px;font-weight:normal;color:#0b0b0d;;transform:scaleX(1.0065);">False Positive</div>
<div class="t" style="left:2000.25px;top:1307.20px;font-size:25px;font-weight:normal;color:#0b0b0d;;transform:scaleX(1.0228);">Exempted for all time</div>
<div class="t" style="left:2329.13px;top:1309.70px;font-size:21px;font-weight:bold;color:#3274d6;;transform:scaleX(0.8714);">BS</div>
<div class="t" style="left:2377.68px;top:1307.00px;font-size:25.5px;font-weight:normal;color:#0b0b0d;;transform:scaleX(0.9603);">Bhavya S...</div>
</body></html>
